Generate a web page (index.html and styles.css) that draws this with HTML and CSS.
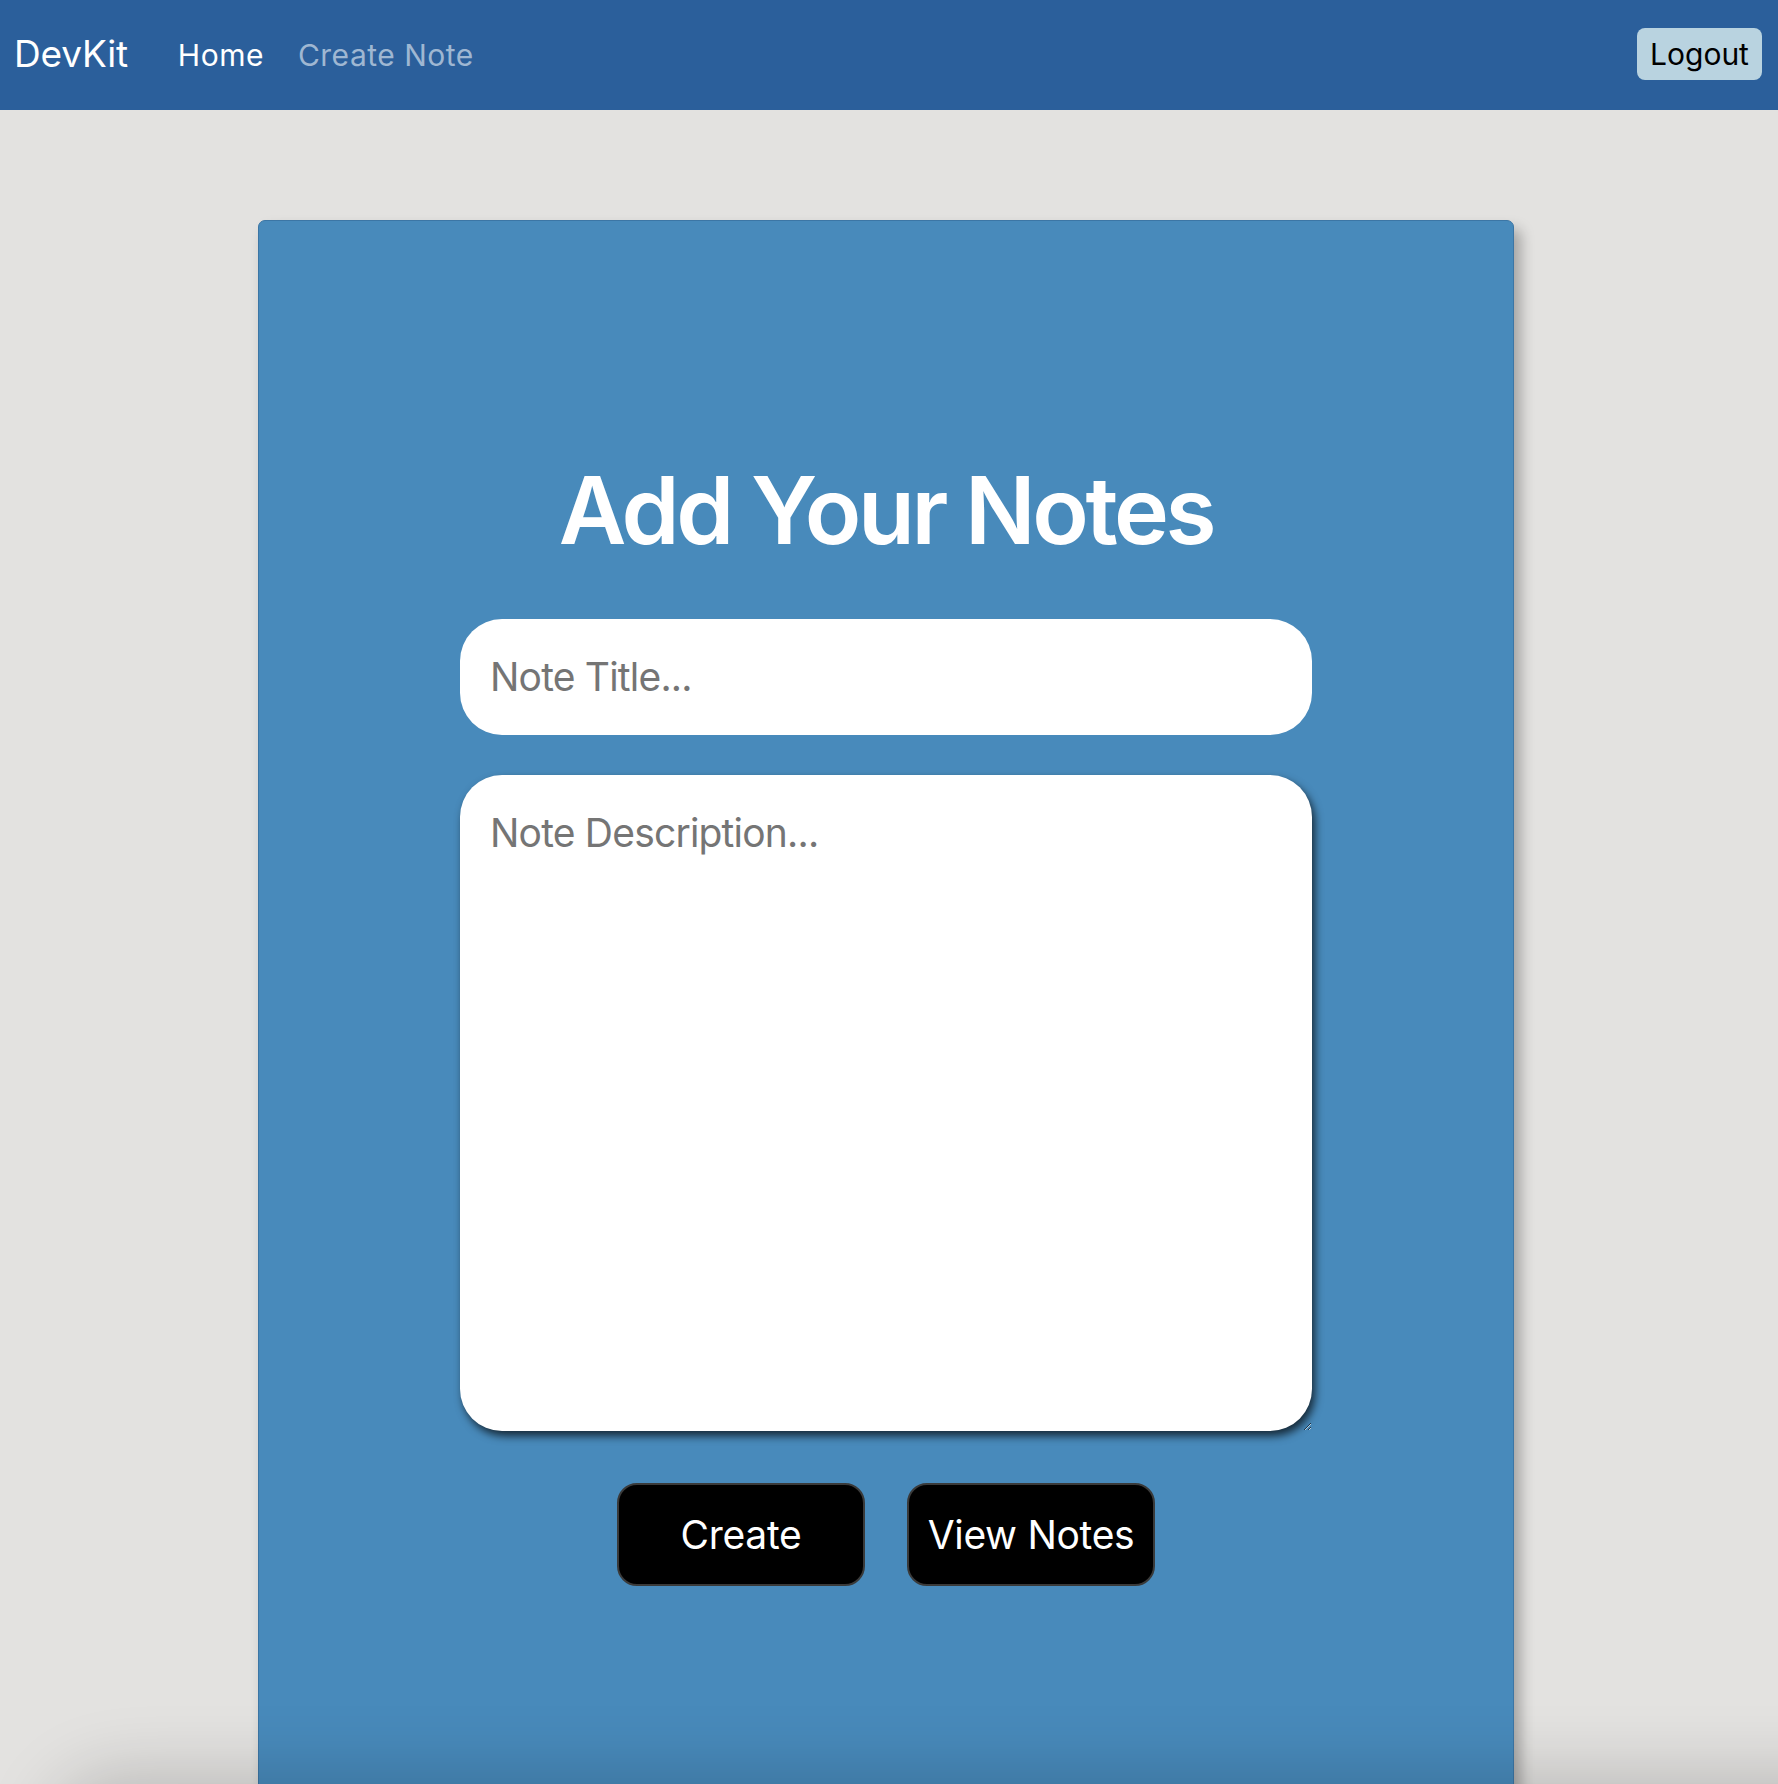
FILE: index.html
```html
<!DOCTYPE html>
<html lang="en">
<head>
<meta charset="utf-8">
<title>DevKit - Create Note</title>
<link rel="stylesheet" href="styles.css">
</head>
<body>
<nav class="navbar">
  <a class="brand" href="#">DevKit</a>
  <div class="nav-links">
    <a class="nav-link active" href="#">Home</a>
    <a class="nav-link muted" href="#">Create Note</a>
  </div>
  <button class="logout" type="button">Logout</button>
</nav>
<main class="main">
  <section class="card">
    <h1 class="title">Add Your Notes</h1>
    <form class="note-form">
      <input class="field title-field" type="text" placeholder="Note Title...">
      <textarea class="field desc-field" placeholder="Note Description..."></textarea>
      <div class="actions">
        <button class="btn" type="button">Create</button>
        <button class="btn" type="button">View Notes</button>
      </div>
    </form>
  </section>
</main>
<div class="bottom-shade"></div>
</body>
</html>
```
FILE: styles.css
```css
* { box-sizing: border-box; }
html, body { margin: 0; padding: 0; }
body {
  background: #e3e2e0;
  font-family: Inter, "Noto Sans", "Liberation Sans", sans-serif;
  color: #212529;
}
.navbar {
  height: 110px;
  background: #2b5f9b;
  display: flex;
  align-items: center;
  padding: 0 16px 0 14px;
}
.brand {
  color: #fff;
  text-decoration: none;
  font-size: 37px;
  line-height: 1;
  margin-right: 50px;
  margin-top: -4px;
  letter-spacing: -0.2px;
}
.nav-links {
  display: flex;
  gap: 34px;
  flex: 1;
}
.nav-link {
  font-size: 30px;
  letter-spacing: 0.5px;
  text-decoration: none;
  line-height: 1;
}
.nav-link.active { color: #fff; }
.nav-link.muted { color: #9fb7d2; }
.logout {
  background: #b9d3e0;
  border: none;
  border-radius: 8px;
  color: #000;
  font-family: inherit;
  font-size: 30px;
  width: 125px;
  height: 52px;
  padding: 0;
  margin-top: -2px;
}
.main {
  display: flex;
  justify-content: center;
  padding: 110px 6px 0 0;
}
.card {
  width: 1256px;
  min-height: 1700px;
  background: #488abb;
  border: 1px solid #3c76a5;
  border-radius: 7px 7px 0 0;
  box-shadow: 7px 9px 14px rgba(0, 0, 0, 0.28);
  padding-top: 234px;
  display: flex;
  flex-direction: column;
  align-items: center;
}
.title {
  margin: 0;
  color: #fff;
  font-size: 93px;
  font-weight: 600;
  line-height: 1.2;
  letter-spacing: -3.4px;
}
.note-form {
  display: flex;
  flex-direction: column;
  align-items: center;
  margin-top: 52px;
}
.field {
  width: 852px;
  border: none;
  border-radius: 42px;
  background: #fff;
  font-family: inherit;
  color: #212529;
  outline: none;
}
.field::placeholder { color: #757575; }
.title-field {
  height: 116px;
  padding: 0 30px;
  font-size: 39px;
  letter-spacing: -0.8px;
}
.desc-field {
  margin-top: 40px;
  height: 656px;
  padding: 34px 30px;
  font-size: 39px;
  letter-spacing: -0.8px;
  box-shadow: 3px 5px 8px rgba(0, 0, 0, 0.7);
  resize: both;
}
.actions {
  display: flex;
  gap: 42px;
  margin-top: 52px;
}
.btn {
  width: 248px;
  height: 103px;
  background: #000;
  color: #fff;
  border: 2px solid #3a3a3a;
  border-radius: 20px;
  font-family: inherit;
  font-size: 39px;
  letter-spacing: -0.3px;
  padding: 0;
}
.bottom-shade {
  position: fixed;
  left: 60px;
  right: -200px;
  bottom: -120px;
  height: 120px;
  box-shadow: 0 0 70px 10px rgba(0, 0, 0, 0.18);
  border-radius: 60px;
  z-index: 5;
}
```
